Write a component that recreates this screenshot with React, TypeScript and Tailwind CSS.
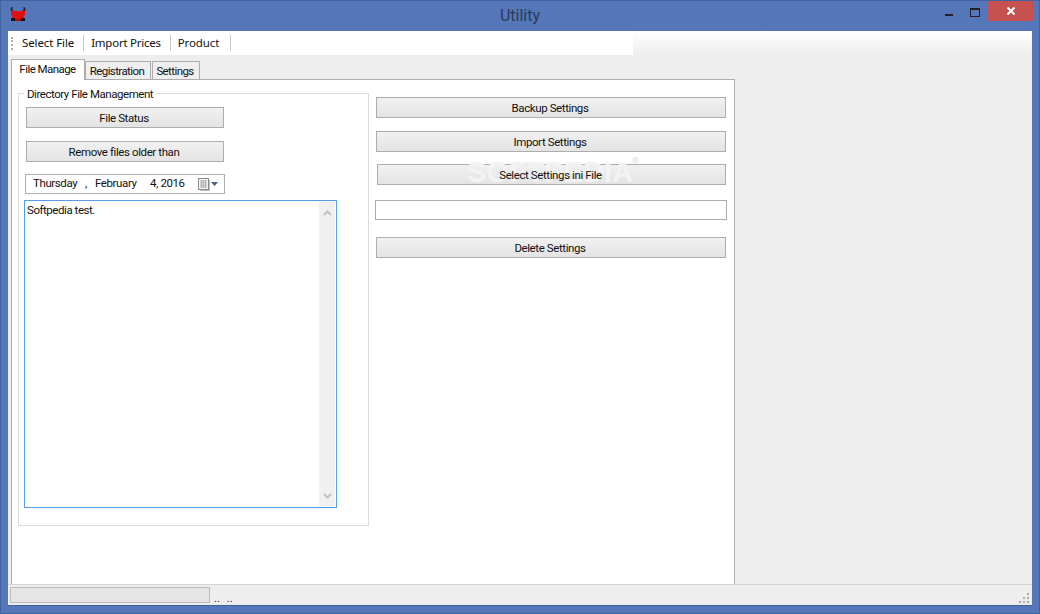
const ui = { fontFamily: '"Roboto", "Liberation Sans", sans-serif' };

function BullIcon() {
  return (
    <svg width="16" height="15" viewBox="0 0 16 15">
      <path d="M1.5 0 C0 3 0.5 5 2 6 L4 4 C2.5 4 2 2 2.5 0 Z M14.5 0 C16 3 15.5 5 14 6 L12 4 C13.5 4 14 2 13.5 0 Z" fill="#1a1a1a" />
      <path d="M1 3 C4 4.5 12 4.5 15 3 L15 7 L13 12 L3 12 L1 7 Z" fill="#e01010" />
      <rect x="1" y="11" width="4" height="3" fill="#111" />
      <rect x="11" y="11" width="4" height="3" fill="#111" />
      <rect x="5" y="12" width="6" height="2" fill="#b00c0c" />
    </svg>
  );
}

function Btn({ label, className }: { label: string; className: string }) {
  return (
    <button className={`block h-[21px] border border-[#adadad] bg-gradient-to-b from-[#f1f1f1] to-[#e4e4e4] pr-[2px] pt-[2px] text-center text-[11.5px] tracking-[-0.4px] text-[#111] ${className}`}>
      <span className="relative z-20">{label}</span>
    </button>
  );
}

function Tab({ label, active, className }: { label: string; active?: boolean; className: string }) {
  return active ? (
    <div className={`relative z-10 flex h-[21px] items-center justify-center border border-b-0 border-[#adadad] bg-white pr-px text-[11.5px] tracking-[-0.55px] text-[#111] ${className}`}>
      {label}
    </div>
  ) : (
    <div className={`flex h-[18px] items-center justify-center border border-b-0 border-[#adadad] bg-[#efefef] pr-[2px] pt-[2px] text-[11.5px] tracking-[-0.6px] text-[#111] ${className}`}>
      {label}
    </div>
  );
}

function CalendarIcon() {
  return (
    <svg width="24" height="14" viewBox="0 0 24 14">
      <rect x="2" y="3" width="10" height="11" fill="#bdbdbd" />
      <rect x="0.5" y="1.5" width="10" height="11" fill="#f4f4f4" stroke="#8a8a8a" />
      <path d="M2 4h7M2 6h7M2 8h7M2 10h7M3.5 3v8M5.5 3v8M7.5 3v8" stroke="#b5b5b5" />
      <path d="M13 5 H20 L16.5 9 Z" fill="#4d5f80" />
    </svg>
  );
}

function Chevron({ up }: { up?: boolean }) {
  return (
    <svg width="9" height="6" viewBox="0 0 9 6">
      <path d={up ? "M1 5 L4.5 1.5 L8 5" : "M1 1 L4.5 4.5 L8 1"} fill="none" stroke="#c2c2c2" strokeWidth="2" />
    </svg>
  );
}

function Grip() {
  return (
    <svg width="12" height="12" viewBox="0 0 12 12" className="mb-[1px] mr-[2px] self-end">
      <path d="M9 1h2v2H9zM5 5h2v2H5zM9 5h2v2H9zM1 9h2v2H1zM5 9h2v2H5zM9 9h2v2H9z" fill="#a9a9a9" />
    </svg>
  );
}

export default function App() {
  return (
    <div className="flex h-[614px] w-[1040px] flex-col overflow-hidden border border-[#41639f] bg-[#5577b9]" style={ui}>
      {/* title bar */}
      <div className="relative flex h-[30px] shrink-0 items-center justify-center">
        <div className="absolute left-[9px] top-[6px]">
          <BullIcon />
        </div>
        <span className="text-[16px] text-[#2c3a55]">Utility</span>
        <div className="absolute right-[6px] top-0 flex items-start">
          <div className="mr-[17px] mt-[13px] h-[2px] w-[8px] bg-[#222]" />
          <div className="mr-[8px] mt-[7px] h-[9px] w-[10px] border border-t-2 border-[#222]" />
          <div className="flex h-[20px] w-[45px] items-center justify-center bg-[#c75050]">
            <svg width="8" height="8" viewBox="0 0 8 8">
              <path d="M0.5 0.5 L7.5 7.5 M7.5 0.5 L0.5 7.5" stroke="#fff" strokeWidth="2" />
            </svg>
          </div>
        </div>
      </div>

      {/* client area */}
      <div className="mx-[7px] mb-[7px] flex min-h-0 flex-1 flex-col border-b border-[#3f5f9b] bg-[#eeeeee]">
        {/* toolbar */}
        <div className="flex h-[24px] shrink-0 items-center bg-gradient-to-b from-white to-[#eeeeee] text-[11.5px] tracking-[-0.1px] text-[#111]" style={{ fontFamily: '"Noto Sans", sans-serif' }}>
          <div className="flex h-full w-[625px] items-center bg-white">
            <div className="ml-[3px] mr-[9px] h-[13px] w-[2px] border-l-2 border-dotted border-[#aaa]" />
            <span className="pr-[9px]">Select File</span>
            <div className="h-[16px] w-px bg-[#c9c9c9]" />
            <span className="pl-[7px] pr-[9px] tracking-[-0.25px]">Import Prices</span>
            <div className="h-[16px] w-px bg-[#c9c9c9]" />
            <span className="pl-[7px] pr-[11px]">Product</span>
            <div className="h-[16px] w-px bg-[#c9c9c9]" />
          </div>
        </div>

        {/* tabs */}
        <div className="flex h-[24px] shrink-0 items-end pl-[3px]">
          <Tab label="File Manage" active className="-mb-px w-[74px]" />
          <Tab label="Registration" className="w-[66px]" />
          <Tab label="Settings" className="ml-px w-[48px]" />
        </div>

        {/* tab page */}
        <div className="ml-[3px] flex min-h-0 w-[724px] flex-1 border border-b-0 border-[#adadad] bg-white">
          <div className="relative ml-[6px] mt-[13px] h-[433px] w-[351px] shrink-0 border border-[#dcdcdc]">
            <span className="absolute -top-[7px] left-[5px] bg-white px-[3px] text-[11.5px] leading-[14px] tracking-[-0.45px] text-[#111]">
              Directory File Management
            </span>
            <Btn label="File Status" className="ml-[7px] mt-[13px] w-[198px]" />
            <Btn label="Remove files older than" className="ml-[7px] mt-[13px] w-[198px]" />
            <div className="ml-[6px] mt-[12px] flex h-[20px] w-[200px] items-center border border-[#adadad] pl-[7px] text-[11.5px] tracking-[-0.4px] text-[#111]">
              <span className="w-[52px]">Thursday</span>
              <span className="w-[10px]">,</span>
              <span className="w-[55px]">February</span>
              <span className="w-[48px]">4, 2016</span>
              <CalendarIcon />
            </div>
            <div className="ml-[5px] mt-[6px] flex h-[308px] w-[313px] border border-[#569de5] text-[11.5px] tracking-[-0.45px] text-[#111]">
              <div className="flex-1 px-[2px] pt-px">Softpedia test.</div>
              <div className="my-px mr-px flex w-[16px] flex-col items-center justify-between bg-[#f0f0f0] pb-[7px] pt-[8px]">
                <Chevron up />
                <Chevron />
              </div>
            </div>
          </div>

          <div className="relative ml-[6px] mt-[17px] w-[352px] shrink-0">
            <Btn label="Backup Settings" className="ml-px w-[350px]" />
            <Btn label="Import Settings" className="ml-px mt-[13px] w-[350px]" />
            <Btn label="Select Settings ini File" className="ml-[2px] mt-[12px] w-[349px]" />
            <div className="mt-[15px] h-[20px] w-[352px] border border-[#adadad] bg-white" />
            <Btn label="Delete Settings" className="ml-px mt-[17px] w-[350px]" />
            {/* watermark */}
            <span className="pointer-events-none absolute left-[92px] top-[59px] z-10 text-[29px] font-bold leading-[32px] text-white/60" style={{ fontFamily: '"Liberation Sans", sans-serif', textShadow: "0 0 1px #e2e2e2" }}>
              SOFTPEDIA
            </span>
            <span className="pointer-events-none absolute left-[257px] top-[59px] z-10 text-[9px] leading-[10px] text-[#dddddd]">®</span>
          </div>
        </div>

        {/* status bar */}
        <div className="flex h-[21px] shrink-0 items-center border-t border-[#d4d4d4] pl-[2px]">
          <div className="h-[16px] w-[200px] border border-[#bcbcbc] bg-[#e5e5e5]" />
          <span className="ml-[4px] mt-[6px] text-[11px] leading-none text-[#111]">..</span>
          <span className="ml-[7px] mt-[6px] text-[11px] leading-none text-[#111]">..</span>
          <div className="flex-1" />
          <Grip />
        </div>
      </div>
    </div>
  );
}
